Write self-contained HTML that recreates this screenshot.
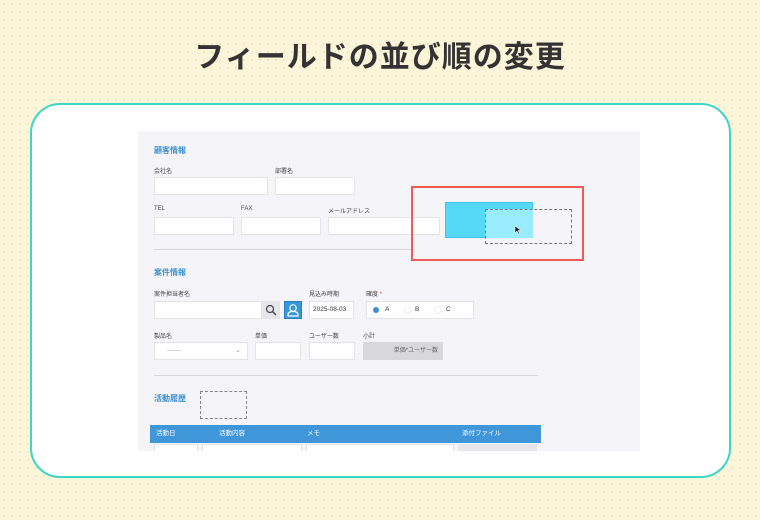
<!DOCTYPE html><html><head><meta charset="utf-8"><style>
*{margin:0;padding:0;box-sizing:border-box}
body{width:760px;height:520px;overflow:hidden;background:#fdf5da;background-image:radial-gradient(#efe3bd 0.8px,transparent 1px);background-size:8px 8px;font-family:"Liberation Sans","Noto Sans CJK JP",sans-serif;position:relative}
.title{position:absolute;top:32px;left:0;width:760px;text-align:center;font-size:30px;font-weight:bold;color:#333;letter-spacing:1px}
.card{position:absolute;left:30px;top:103px;width:701px;height:375px;background:#fff;border:2.5px solid #3dd6c6;border-radius:30px}
.shot{position:absolute;left:138px;top:131px;width:502px;height:320px;background:#f5f5f9;overflow:hidden}
.a{position:absolute}
.h{color:#3b8fd1;font-size:8px;font-weight:bold}
.l{color:#444;font-size:6px}
.in{background:#fff;border:1px solid #e3e3e8}
.hr{height:1px;background:#d8d8dc}
</style></head><body>
<div class="title">フィールドの並び順の変更</div>
<div class="card"></div>
<div class="shot">
<div class="a h" style="left:16px;top:14px">顧客情報</div>
<div class="a l" style="left:16px;top:35px">会社名</div>
<div class="a l" style="left:137px;top:35px">部署名</div>
<div class="a in" style="left:16px;top:46px;width:114px;height:18px"></div>
<div class="a in" style="left:137px;top:46px;width:80px;height:18px"></div>
<div class="a l" style="left:16px;top:75px">TEL</div>
<div class="a l" style="left:103px;top:75px">FAX</div>
<div class="a l" style="left:190px;top:75px">メールアドレス</div>
<div class="a in" style="left:16px;top:86px;width:80px;height:18px"></div>
<div class="a in" style="left:103px;top:86px;width:80px;height:18px"></div>
<div class="a in" style="left:190px;top:86px;width:112px;height:18px"></div>
<div class="a hr" style="left:16px;top:118px;width:260px"></div>
<div class="a" style="left:273px;top:55px;width:173px;height:75px;border:2px solid #f05a5a"></div>
<div class="a" style="left:307px;top:71px;width:88px;height:36px;background:#56d8f8;border:1px solid #45c4e8"></div>
<div class="a" style="left:347px;top:78px;width:48px;height:29px;background:#98ecfc"></div>
<div class="a" style="left:347px;top:78px;width:87px;height:35px;border:1px dashed #777"></div>
<svg class="a" style="left:376px;top:94px" width="8" height="10" viewBox="0 0 8 10"><path d="M1 1v7l2-2 1.5 3 1-.5L4 5.5h3z" fill="#222" stroke="#fff" stroke-width=".5"/></svg>
<div class="a h" style="left:16px;top:136px">案件情報</div>
<div class="a l" style="left:16px;top:158px">案件担当者名</div>
<div class="a in" style="left:16px;top:170px;width:108px;height:18px"></div>
<div class="a" style="left:124px;top:170px;width:18px;height:18px;background:#e6e6ea"><svg width="18" height="18" viewBox="0 0 18 18"><circle cx="8" cy="8" r="3.5" fill="none" stroke="#444" stroke-width="1.2"/><path d="M10.5 10.5L14 14" stroke="#444" stroke-width="1.4"/></svg></div>
<div class="a" style="left:146px;top:170px;width:18px;height:18px;background:#3498db;border:1px solid #2a80c0"><svg width="16" height="16" viewBox="0 0 16 16"><circle cx="8" cy="6" r="3.2" fill="none" stroke="#fff" stroke-width="1.2"/><path d="M3 14v-1.5c0-2 2-3 5-3s5 1 5 3V14z" fill="none" stroke="#fff" stroke-width="1.2"/></svg></div>
<div class="a l" style="left:171px;top:158px">見込み時期</div>
<div class="a in" style="left:171px;top:170px;width:45px;height:18px;font-size:6.5px;color:#333;line-height:16px;padding-left:3px">2025-08-03</div>
<div class="a l" style="left:228px;top:158px">確度 <span style="color:#e33">*</span></div>
<div class="a in" style="left:228px;top:170px;width:108px;height:18px;font-size:6.5px;color:#333;line-height:16px">
<span style="position:absolute;left:6px;top:5px;width:6px;height:6px;border-radius:50%;background:#3b8fd1"></span><span style="position:absolute;left:18px">A</span>
<span style="position:absolute;left:37px;top:4px;width:8px;height:8px;border-radius:50%;background:#fff;border:1px solid #eee"></span><span style="position:absolute;left:48px">B</span>
<span style="position:absolute;left:67px;top:4px;width:8px;height:8px;border-radius:50%;background:#fff;border:1px solid #eee"></span><span style="position:absolute;left:79px">C</span></div>
<div class="a l" style="left:16px;top:200px">製品名</div>
<div class="a in" style="left:16px;top:211px;width:94px;height:18px;font-size:7px;color:#aaa;line-height:15px;padding-left:12px">—— <span style="position:absolute;right:6px;color:#999">⌄</span></div>
<div class="a l" style="left:117px;top:200px">単価</div>
<div class="a in" style="left:117px;top:211px;width:46px;height:18px"></div>
<div class="a l" style="left:171px;top:200px">ユーザー数</div>
<div class="a in" style="left:171px;top:211px;width:46px;height:18px"></div>
<div class="a l" style="left:225px;top:200px">小計</div>
<div class="a" style="left:225px;top:211px;width:80px;height:18px;background:#d8d8dc;font-size:6px;color:#666;text-align:right;padding-right:5px;line-height:18px">単価*ユーザー数</div>
<div class="a hr" style="left:16px;top:244px;width:384px"></div>
<div class="a h" style="left:16px;top:262px">活動履歴</div>
<div class="a" style="left:62px;top:260px;width:47px;height:28px;border:1px dashed #888"></div>
<div class="a" style="left:12px;top:294px;width:391px;height:18px;background:#3f97d9;font-size:6.5px;color:#fff;line-height:18px">
<span style="position:absolute;left:6px">活動日</span><span style="position:absolute;left:69px">活動内容</span><span style="position:absolute;left:157px">メモ</span><span style="position:absolute;left:312px">添付ファイル</span></div>
<div class="a in" style="left:16px;top:313px;width:44px;height:10px"></div>
<div class="a in" style="left:64px;top:313px;width:100px;height:10px"></div>
<div class="a in" style="left:168px;top:313px;width:148px;height:10px"></div>
<div class="a" style="left:320px;top:313px;width:79px;height:10px;background:#e6e6ea"></div>
</div>
</body></html>
